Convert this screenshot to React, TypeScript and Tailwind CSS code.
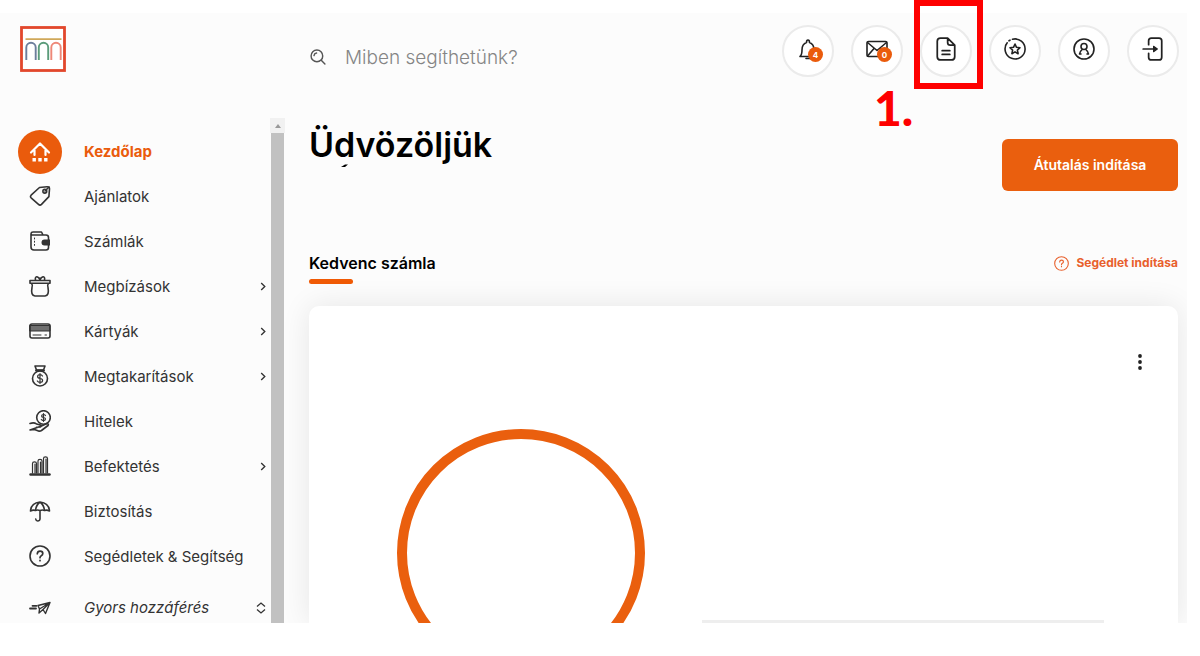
// ─── Online bank home page — top bar, side menu, favourite account ───
import type { ReactNode } from "react"

const Icon = ({ children, className = "size-[22px]" }: { children: ReactNode; className?: string }) => (
  <svg
    viewBox="0 0 22 22"
    className={className}
    fill="none"
    stroke="currentColor"
    strokeWidth="1.6"
    strokeLinecap="round"
    strokeLinejoin="round"
    aria-hidden="true"
  >
    {children}
  </svg>
)

const HomeIcon = () => (
  <Icon>
    <path d="M2 11.5 11 2.500 20 11.500M5.500 9v5M16.500 9v5" strokeWidth="2.200" />
    <path d="M3.500 17h3.400v3.400H3.500zM9.300 17h3.400v3.400H9.300zM15.100 17h3.400v3.400h-3.400z" fill="currentColor" stroke="none" />
  </Icon>
)

const TagIcon = () => (
  <Icon>
    <path d="M10.500 2.500 18 1.700q2.600-.2 2.500 2.300l-.6 7.600-7.400 7.800q-1.500 1.500-3 0l-7.400-6.600q-1.200-1.300 0-2.600z" />
    <circle cx="15.800" cy="6.200" r="1.900" />
    <path d="m16 6 4-4" />
  </Icon>
)

const WalletIcon = () => (
  <Icon>
    <path d="M2 4.500V17q0 3 3 3h12q2.500 0 2.500-2.500V7.500Q19.500 5 17 5H4Q1.500 5 2 3.500 2.300 2 4 2h8.500L14 5" />
    <path d="M5.500 8v9" strokeDasharray="1 2.200" strokeWidth="1" />
    <path d="M21 9.500h-5.500a3 3 0 0 0 0 6H21z" fill="currentColor" stroke="none" />
  </Icon>
)

const GiftIcon = () => (
  <Icon>
    <path d="M1 5.500h20v2.800H1zM2.500 8.500q1.500 1.500.5 4-1.500 8 3 8.500h10q4.500-.5 3-8.500-1-2.500.5-4" />
    <path d="M11 5C9 .5 5.500 1 6.500 5M11 5c2-4.500 5.500-4 4.500 0M11 5V3" />
  </Icon>
)

const CardIcon = () => (
  <Icon>
    <rect x="1" y="4" width="20" height="14" rx="2" />
    <path d="M1 5.500h20v5.500H1z" fill="currentColor" fillOpacity=".7" strokeWidth="1" />
    <path d="M4 15h8M16 15h1.500" strokeWidth="1" />
  </Icon>
)

const MoneyBagIcon = () => (
  <Icon>
    <path d="M6 1h10l-1.500 4h-7z" />
    <path d="M7 5.500h8" strokeWidth="2" />
    <circle cx="11" cy="13.500" r="7.500" />
    <path d="M13.500 11q-.8-1.300-2.500-1.300-2.400 0-2.400 1.900 0 1.600 2.400 1.900 2.600.3 2.600 2 0 1.900-2.600 1.900-1.900 0-2.700-1.400M11 8.500v10" strokeWidth="1.200" />
  </Icon>
)

const LoanIcon = () => (
  <Icon>
    <circle cx="14.500" cy="7.500" r="6.800" />
    <path d="M16.500 5.500q-.8-1-2-1-1.900 0-1.900 1.500 0 1.300 1.900 1.500 2 .2 2 1.600 0 1.500-2 1.500-1.500 0-2.200-1.100M14.500 3.500v8" strokeWidth="1.200" />
    <path d="M1 13.500q4-1.500 6.500.5l4 1q1.500.8 0 2l-4 .3M12.500 16l5.500-2.500q2 .3 1 2l-6.500 5q-1.500 1-3 .5L5.500 19.500 1 20z" />
  </Icon>
)

const ChartIcon = () => (
  <Icon>
    <path d="M3.500 18V8.500a2 1.600 0 0 1 4 0V18M9 18V6a2 1.600 0 0 1 4 0v12M14.500 18V3.500a2 1.600 0 0 1 4 0V18M6 9v9M11.500 7v11M17 4v14" strokeWidth="1.200" />
    <path d="M1.500 19.500h19" strokeWidth="2.500" />
  </Icon>
)

const UmbrellaIcon = () => (
  <Icon>
    <path d="M1.500 11Q2 3 11 2q9 1 9.500 9-2.500-1.500-5-.5-2-1-4.500 0-2.500-1-4.500 0-2.500-1-5 .5zM6.500 10.500Q7 5 11 2q4 3 4.500 8.500M11 10.500V19q-.3 2-2.300 2-1.700 0-2-2" />
  </Icon>
)

const HelpIcon = ({ className = "size-[22px]" }: { className?: string }) => (
  <Icon className={className}>
    <circle cx="11" cy="11" r="10" />
    <path d="M8.300 8.800q.2-2.700 2.800-2.700 2.700 0 2.700 2.400 0 1.500-1.500 2.200-1.300.7-1.300 2M11 15.300v.4" strokeWidth="1.700" />
  </Icon>
)

const PlaneIcon = () => (
  <Icon>
    <path d="m9 8.500 12-3-4.500 11-2.500-4-4 3.500.5-4zM10.500 12 21 5.500 14 12.500" strokeWidth="1.400" />
    <path d="M3.500 8.800h4M1 11.500h6" strokeWidth="1.800" />
  </Icon>
)

const Chevron = () => (
  <svg viewBox="0 0 6 10" className="h-[9px] w-[6px]" fill="none" stroke="currentColor" strokeWidth="1.500" aria-hidden="true">
    <path d="m1 1 4 4-4 4" />
  </svg>
)

const NAV = [
  { label: "Ajánlatok", icon: TagIcon },
  { label: "Számlák", icon: WalletIcon },
  { label: "Megbízások", icon: GiftIcon, sub: true },
  { label: "Kártyák", icon: CardIcon, sub: true },
  { label: "Megtakarítások", icon: MoneyBagIcon, sub: true },
  { label: "Hitelek", icon: LoanIcon },
  { label: "Befektetés", icon: ChartIcon, sub: true },
  { label: "Biztosítás", icon: UmbrellaIcon },
  { label: "Segédletek & Segítség", icon: HelpIcon },
]

function RoundButton({ label, badge, children }: { label: string; badge?: string; children: ReactNode }) {
  return (
    <button
      aria-label={label}
      className="relative flex size-[52px] items-center justify-center rounded-full border-2 border-[#ebebeb] bg-white pb-1 text-[#222]"
    >
      {children}
      {badge && (
        <span className="absolute top-5 left-6 flex size-[15px] items-center justify-center rounded-full bg-[#ea5b0c] text-[8px] font-bold text-white">
          {badge}
        </span>
      )}
    </button>
  )
}

function TopBar() {
  return (
    <header className="flex h-[76px] items-center pr-2">
      <a href="#" aria-label="Kezdőlap" className="ml-5 w-[290px] shrink-0">
        <svg viewBox="0 0 46 46" className="mb-1 size-[46px]" fill="none" aria-hidden="true">
          <rect x="1.500" y="1.500" width="43" height="43" stroke="#e2472c" strokeWidth="2.800" fill="#fff" />
          <path d="M5.500 13.200h36" stroke="#d0a85a" strokeWidth="1.800" />
          <path d="M6.300 34V21.500a4.700 4.700 0 0 1 9.400 0V34" stroke="#6c7e9c" strokeWidth="1.900" />
          <path d="M18.800 34V21.500a4.700 4.700 0 0 1 9.400 0V34" stroke="#5b9c7b" strokeWidth="1.900" />
          <path d="M31.300 34V21.500a4.700 4.700 0 0 1 9.400 0V34" stroke="#ee8878" strokeWidth="1.900" />
        </svg>
      </a>

      <label className="flex flex-1 items-center gap-[19px] pt-3 text-[#555]">
        <Icon className="size-4">
          <circle cx="9.500" cy="9.500" r="8" strokeWidth="2" />
          <path d="m15.500 15.500 5 5M5.500 9q.4-3 3.500-3.500" strokeWidth="2" />
        </Icon>
        <input
          type="search"
          aria-label="Keresés"
          placeholder="Miben segíthetünk?"
          className="h-8 min-w-0 flex-1 bg-transparent text-[19px] font-light outline-none placeholder:text-[#858585]"
        />
      </label>

      <div className="flex gap-[17px]">
        <RoundButton label="Értesítések" badge="4">
          <Icon>
            <path d="M3 18.500h16q-2-1.500-2-6.500 0-6-4.500-7.500Q12.500 2 11 2T9.500 4.500Q5 6 5 12q0 5-2 6.500zM9 20.500h4" />
          </Icon>
        </RoundButton>
        <RoundButton label="Üzenetek" badge="0">
          <Icon>
            <rect x="1" y="3.500" width="20" height="15" rx="1.500" />
            <path d="m1.500 4.500 9.500 8 9.500-8M1.500 18 8 10.500M20.500 18 14 10.500" />
          </Icon>
        </RoundButton>

        <div className="relative">
          <RoundButton label="Dokumentumok">
            <Icon className="size-6">
              <path d="M12.500 1H6Q3 1 3 4v14q0 3 3 3h10q3 0 3-3V7.500zM12.500 1v4q0 2.500 2.500 2.500h4M7.500 12.500h7M7.500 16h7" />
            </Icon>
          </RoundButton>
          {/* Step marker of the guide */}
          <div className="pointer-events-none absolute -top-[25px] -left-[6px] h-[89px] w-[69px] border-6 border-[#fe0000]" />
          <strong className="pointer-events-none absolute top-[59px] -left-[46px] font-[Lato] text-5xl leading-[48px] font-black text-[#fe0000]">
            1.
          </strong>
        </div>

        <RoundButton label="Kedvencek">
          <Icon>
            <path d="M8.500 1.300A10 10 0 1 1 3.200 4.800M2 6.500 1.500 8M5 2.800 6 2.200" />
            <path d="m11 6 1.500 3.300 3.500.4-2.600 2.400.7 3.600-3.100-1.800-3.100 1.800.7-3.600L6 9.700l3.500-.4z" />
          </Icon>
        </RoundButton>
        <RoundButton label="Profil">
          <Icon>
            <circle cx="11" cy="11" r="10" />
            <circle cx="11" cy="8.500" r="3" />
            <path d="M6.500 16q.2-2.500 2.700-4.500M15.500 16q-.2-2.500-2.700-4.500M6.500 16h1.500M14 16h1.500" />
          </Icon>
        </RoundButton>
        <RoundButton label="Kilépés">
          <Icon className="size-6">
            <path d="M7 7V3.500Q7 1 9.500 1h7Q19 1 19 3.500v15q0 2.500-2.500 2.500h-7Q7 21 7 18.500V15M2 11h12" />
            <path d="m11.500 8.500 3.500 2.500-3.500 2.500z" fill="currentColor" strokeWidth="1" />
          </Icon>
        </RoundButton>
      </div>
    </header>
  )
}

function SideMenu() {
  return (
    <aside className="flex w-[285px] shrink-0 pt-[29px]">
      <nav className="w-[270px] pt-[11px] text-[15px] text-[#333]">
        <a href="#" aria-current="page" className="flex h-[45px] items-center font-bold text-[#ea5b0c]">
          <span className="mr-[22px] ml-[18px] flex size-11 items-center justify-center rounded-full bg-[#ea5b0c] text-white">
            <HomeIcon />
          </span>
          <span className="pt-px">Kezdőlap</span>
        </a>
        {NAV.map(item => (
          <a key={item.label} href="#" className="flex h-[45px] items-center pr-1">
            <span className="mr-[33px] ml-[29px] pb-[2px]">
              <item.icon />
            </span>
            <span className="flex-1 pt-[2px]">{item.label}</span>
            {item.sub && <Chevron />}
          </a>
        ))}
        <a href="#" className="mt-[13px] flex h-[31px] items-center pr-1 italic">
          <span className="mr-[33px] ml-[29px]">
            <PlaneIcon />
          </span>
          <span className="flex-1 pt-[2px]">Gyors hozzáférés</span>
          <svg viewBox="0 0 10 12" className="h-3 w-[10px]" fill="none" stroke="currentColor" strokeWidth="1.300" aria-hidden="true">
            <path d="m1 4.500 4-3.500 4 3.500M1 7.500 5 11l4-3.500" />
          </svg>
        </a>
      </nav>

      {/* Scrollbar */}
      <div className="flex w-[15px] flex-col items-center" aria-hidden="true">
        <div className="flex h-[15px] w-full shrink-0 items-center justify-center bg-[#f1f1f1]">
          <svg viewBox="0 0 6 4" className="h-1 w-[6px]" fill="#999">
            <path d="M3 0l3 4H0z" />
          </svg>
        </div>
        <div className="w-[13px] flex-1 bg-[#c1c1c1]" />
      </div>
    </aside>
  )
}

export default function App() {
  return (
    <div className="min-h-screen bg-white pt-[13px] pr-[13px] pb-8 font-[Inter,sans-serif]">
      <div className="bg-[#fcfcfc]">
        <TopBar />
        <div className="flex">
          <SideMenu />

          <main className="flex min-w-0 flex-1 flex-col overflow-hidden pr-[9px] pl-6">
            <div className="flex h-[130px] items-start justify-between">
              <div className="pt-9">
                <h1 className="text-[34px] leading-[39px] font-semibold text-black">Üdvözöljük</h1>
                {/* Top edge of the hidden customer name */}
                <svg viewBox="0 0 8 3" className="ml-[31px] h-[3px] w-2" aria-hidden="true">
                  <path d="M1 3 5 .5h3L5 3z" />
                </svg>
              </div>
              <button className="mt-[50px] h-[52px] w-[176px] rounded-md bg-[#ea5f0e] text-sm font-semibold text-white">
                Átutalás indítása
              </button>
            </div>

            <div className="flex h-[87px] justify-between pt-8">
              <div>
                <h2 className="text-base leading-6 font-semibold text-black">Kedvenc számla</h2>
                <div className="mt-1 h-[5px] w-11 rounded-full bg-[#f05a05]" />
              </div>
              <a href="#" className="flex h-6 items-center gap-[7px] text-xs font-bold text-[#e8602c]">
                <HelpIcon className="size-[15px]" />
                Segédlet indítása
              </a>
            </div>

            <section className="flex flex-1 flex-col justify-between rounded-t-[10px] bg-white shadow-[0_0_30px_rgba(0,0,0,0.09)]">
              <div className="flex justify-end pt-[46px] pr-[30px]">
                <button aria-label="További műveletek" className="flex h-5 w-4 items-center justify-center text-[#222]">
                  <svg viewBox="0 0 4 18" className="h-[18px] w-1" fill="currentColor" aria-hidden="true">
                    <circle cx="2" cy="3" r="1.900" />
                    <circle cx="2" cy="9" r="1.900" />
                    <circle cx="2" cy="15" r="1.900" />
                  </svg>
                </button>
              </div>
              <div className="flex h-[194px] items-end overflow-hidden pr-[74px] pl-[88px]">
                <svg viewBox="0 0 248 194" className="mr-[57px] h-[194px] w-[248px] shrink-0" fill="none" aria-hidden="true">
                  <circle cx="124" cy="124" r="119" stroke="#ea5f0e" strokeWidth="10" />
                </svg>
                <div className="h-[3px] flex-1 bg-[#eee]" />
              </div>
            </section>
          </main>
        </div>
      </div>
    </div>
  )
}
